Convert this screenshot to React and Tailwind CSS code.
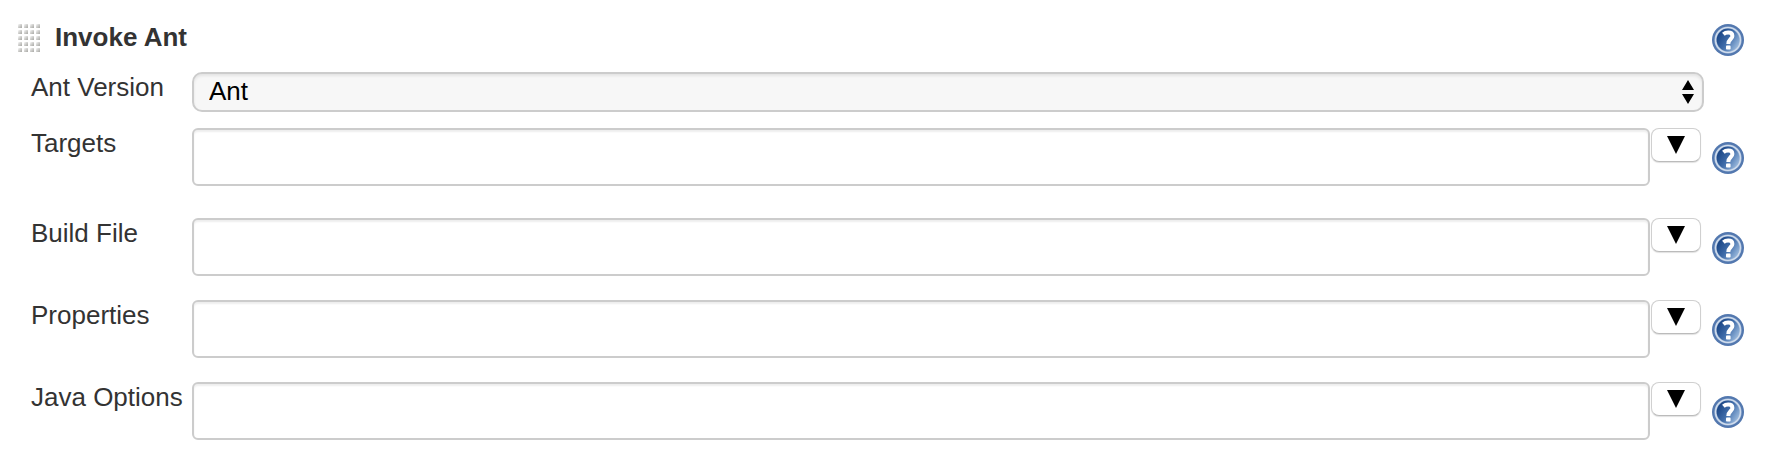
import React from "react";

const FIELDS = [
  { id: "targets", label: "Targets", gap: "mb-8" },
  { id: "build-file", label: "Build File", gap: "mb-6" },
  { id: "properties", label: "Properties", gap: "mb-6" },
  { id: "java-options", label: "Java Options", gap: "mb-6" },
];

function DragHandle() {
  const cells = [];
  for (let r = 0; r < 5; r++) {
    for (let c = 0; c < 4; c++) {
      cells.push(
        <rect key={`${r}-${c}`} x={c * 6} y={r * 6} width="4" height="4" rx="0.5" fill="url(#grip)" />
      );
    }
  }
  return (
    <svg className="h-7 w-6 shrink-0" viewBox="-1 0 24 28" aria-hidden="true">
      <defs>
        <linearGradient id="grip" x1="0" y1="0" x2="1" y2="1">
          <stop offset="0" stopColor="#fafafa" />
          <stop offset="0.45" stopColor="#d2d2d0" />
          <stop offset="1" stopColor="#a6a6a2" />
        </linearGradient>
      </defs>
      {cells}
    </svg>
  );
}

function HelpLink({ topic }) {
  const id = `help-${topic.replace(/\s/g, "")}`;
  return (
    <a href="#help" aria-label={`Help for ${topic}`} className="block size-8 shrink-0">
      <svg viewBox="0 0 32 32" className="size-8">
        <defs>
          <linearGradient id={id} x1="0.1" y1="0.25" x2="0.9" y2="0.75">
            <stop offset="0" stopColor="#1c4787" />
            <stop offset="0.5" stopColor="#3f6ca9" />
            <stop offset="1" stopColor="#8fb0d7" />
          </linearGradient>
        </defs>
        <circle cx="16" cy="16" r="16" fill="#5378af" />
        <circle cx="16" cy="16" r="13.6" fill="#a9bfdb" />
        <circle cx="16" cy="16" r="13" fill="#d5e0ef" />
        <circle cx="16" cy="16" r="11.9" fill="#a9bfdb" />
        <circle cx="16" cy="16" r="11.4" fill={`url(#${id})`} />
        <path d="M11.4 10.2C12.8 9 14.5 8.6 16.2 8.6C18.9 8.6 20.4 9.9 20.4 11.9C20.4 15 16.3 15.2 16.3 20" fill="none" stroke="#fff" strokeWidth="4" />
        <rect x="14" y="21.6" width="4.6" height="4" rx="0.8" fill="#fff" />
      </svg>
    </a>
  );
}

function Row({ id, label, help, gap, children }) {
  return (
    <div className={`flex items-start ${gap}`}>
      <label htmlFor={id} className="w-[161px] shrink-0 leading-[30px]">{label}</label>
      <div className="mr-2 flex min-w-0 flex-1 items-start">{children}</div>
      <div className="w-8 shrink-0 pt-3.5">{help && <HelpLink topic={label} />}</div>
    </div>
  );
}

export default function App() {
  return (
    <form className="bg-white pt-6 pr-[22px] font-['Liberation_Sans',Arial,sans-serif] text-[26px] text-[#333]">
      <header className="mb-4 flex items-start pl-[17px]">
        <DragHandle />
        <h1 className="ml-3.5 flex-1 leading-[26px] font-bold">Invoke Ant</h1>
        <HelpLink topic="Invoke Ant" />
      </header>
      <div className="pl-[31px]">
        <Row id="ant-version" label="Ant Version" gap="mb-4">
          <div className="relative h-10 flex-1">
            <select
              id="ant-version"
              className="block h-10 w-full appearance-none rounded-[10px] border-2 border-[#ccc] bg-[#f7f7f7] pr-10 pb-0.5 pl-[15px] leading-[30px] text-black shadow-[inset_0_2px_3px_rgba(0,0,0,0.08)]"
            >
              <option>Ant</option>
            </select>
            <svg viewBox="0 0 12 24" className="pointer-events-none absolute top-2 right-2.5 h-6 w-3" aria-hidden="true">
              <path d="M6 0L12 10H0ZM0 14H12L6 24Z" fill="#000" />
            </svg>
          </div>
        </Row>
        {FIELDS.map((f) => (
          <Row key={f.id} id={f.id} label={f.label} gap={f.gap} help>
            <input
              id={f.id}
              type="text"
              className="block h-[58px] min-w-0 flex-1 rounded-md border-2 border-[#ccc] bg-white px-3 shadow-[inset_0_2px_2px_rgba(0,0,0,0.07)]"
            />
            <button
              type="button"
              aria-label={`Expand ${f.label}`}
              className="mr-[3px] ml-px flex h-[34px] w-[50px] shrink-0 justify-center rounded-lg border border-[#d0d0d0] border-b-[#bbb] bg-white pt-[7px] shadow-[0_1px_1px_rgba(0,0,0,0.12)]"
            >
              <svg viewBox="0 0 18 18" className="size-[18px]" aria-hidden="true">
                <path d="M0 0H18L9 18Z" fill="#000" />
              </svg>
            </button>
          </Row>
        ))}
      </div>
    </form>
  );
}
